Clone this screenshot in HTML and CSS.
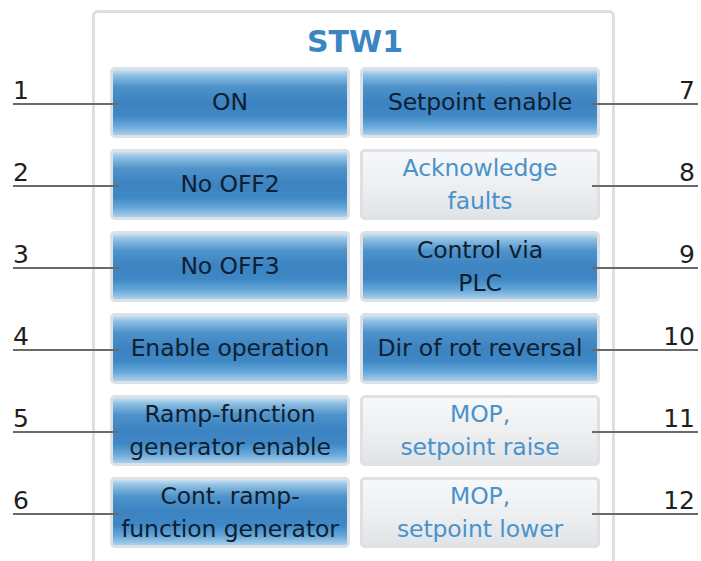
FILE: index.html
```html
<!DOCTYPE html>
<html lang="en">
<head>
<meta charset="utf-8">
<title>STW1</title>
<link rel="stylesheet" href="styles.css">
</head>
<body>
<div class="panel">
  <div class="title">STW1</div>
  <div class="grid">
    <div class="btn on left"><span class="tag">1</span><span class="txt">ON</span></div>
    <div class="btn on right"><span class="tag">7</span><span class="txt">Setpoint enable</span></div>
    <div class="btn on left"><span class="tag">2</span><span class="txt">No OFF2</span></div>
    <div class="btn off right"><span class="tag">8</span><span class="txt">Acknowledge<br>faults</span></div>
    <div class="btn on left"><span class="tag">3</span><span class="txt">No OFF3</span></div>
    <div class="btn on right"><span class="tag">9</span><span class="txt">Control via<br>PLC</span></div>
    <div class="btn on left"><span class="tag">4</span><span class="txt">Enable operation</span></div>
    <div class="btn on right"><span class="tag">10</span><span class="txt">Dir of rot reversal</span></div>
    <div class="btn on left"><span class="tag">5</span><span class="txt">Ramp-function<br>generator enable</span></div>
    <div class="btn off right"><span class="tag">11</span><span class="txt">MOP,<br>setpoint raise</span></div>
    <div class="btn on left"><span class="tag">6</span><span class="txt">Cont. ramp-<br>function generator</span></div>
    <div class="btn off right"><span class="tag">12</span><span class="txt">MOP,<br>setpoint lower</span></div>
  </div>
</div>
</body>
</html>
```
FILE: styles.css
```css
html, body {
  margin: 0;
  padding: 0;
  background: #ffffff;
  overflow: hidden;
}
body {
  width: 701px;
  height: 561px;
  font-family: "DejaVu Sans", Verdana, sans-serif;
}
.panel {
  margin: 10px 0 0 92px;
  width: 523px;
  height: 556px;
  border: 3px solid #dcdfe3;
  border-radius: 6px;
  padding: 12px 12px 0 15px;
  box-sizing: border-box;
}
.title {
  width: 490px;
  text-align: center;
  font-weight: bold;
  font-size: 30px;
  line-height: 34px;
  color: #3a86c3;
  margin-bottom: 8px;
}
.grid {
  display: grid;
  grid-template-columns: 240px 240px;
  grid-auto-rows: 71px;
  column-gap: 10px;
  row-gap: 11px;
}
.btn {
  position: relative;
  box-sizing: border-box;
  border: 3px solid #dde1e5;
  border-radius: 5px;
  display: flex;
  align-items: center;
  justify-content: center;
  text-align: center;
}
.txt {
  font-size: 23.5px;
  letter-spacing: -0.1px;
  line-height: 33px;
  white-space: nowrap;
}
.on {
  background: linear-gradient(to bottom, #c6e0f2 0%, #8fc0e3 8%, #4e92ca 26%, #3b83c1 50%, #3f88c5 70%, #66a7d8 86%, #a9d0ec 100%);
  color: #0e2030;
}
.off {
  background: linear-gradient(to bottom, #f7f8f9 0%, #eceef0 55%, #e1e4e7 100%);
  color: #4a92cb;
}
.tag {
  position: absolute;
  bottom: calc(50% - 2px);
  width: 106px;
  font-size: 25px;
  line-height: 25px;
  color: #1e1e1e;
  border-bottom: 2px solid #6a6a6a;
  box-sizing: border-box;
}
.left .tag {
  right: calc(100% - 6px);
  text-align: left;
}
.right .tag {
  left: calc(100% - 5px);
  text-align: right;
  padding-right: 3px;
}
```
